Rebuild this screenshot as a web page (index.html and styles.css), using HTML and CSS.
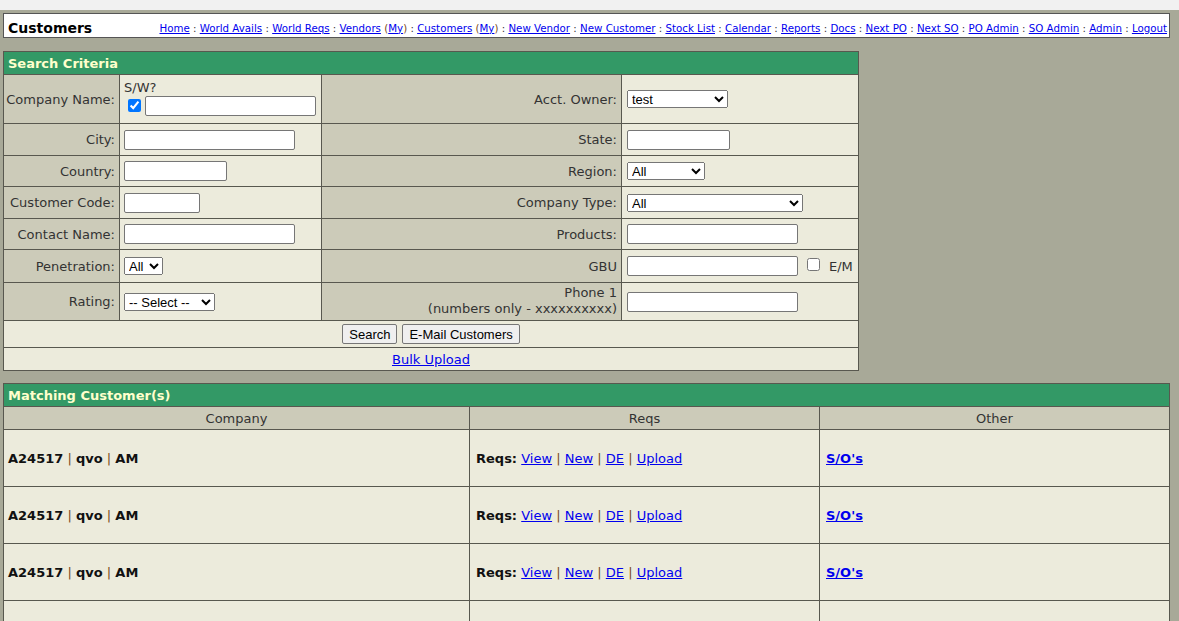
FILE: index.html
```html
<!DOCTYPE html>
<html>
<head>
<meta charset="utf-8">
<title>Customers</title>
<link rel="stylesheet" href="styles.css">
</head>
<body>
<div class="topstrip"></div>
<div class="page">
  <div class="titlebar">
    <span class="title">Customers</span>
    <nav class="nav"><a href="#">Home</a> : <a href="#">World Avails</a> : <a href="#">World Reqs</a> : <a href="#">Vendors</a> <span class="p">(</span><a href="#">My</a><span class="p">)</span> : <a href="#">Customers</a> <span class="p">(</span><a href="#">My</a><span class="p">)</span> : <a href="#">New Vendor</a> : <a href="#">New Customer</a> : <a href="#">Stock List</a> : <a href="#">Calendar</a> : <a href="#">Reports</a> : <a href="#">Docs</a> : <a href="#">Next PO</a> : <a href="#">Next SO</a> : <a href="#">PO Admin</a> : <a href="#">SO Admin</a> : <a href="#">Admin</a> : <a href="#">Logout</a></nav>
  </div>

  <div class="grid search">
    <div class="bar full">Search Criteria</div>

    <div class="lbl">Company Name:</div>
    <div class="val stack">
      <div class="sw">S/W?</div>
      <div class="inline"><input type="checkbox" class="cb" checked><input type="text" class="in w171"></div>
    </div>
    <div class="lbl">Acct. Owner:</div>
    <div class="val c4"><select class="sel w101"><option>test</option></select></div>

    <div class="lbl">City:</div>
    <div class="val"><input type="text" class="in w171"></div>
    <div class="lbl">State:</div>
    <div class="val c4"><input type="text" class="in w103"></div>

    <div class="lbl">Country:</div>
    <div class="val"><input type="text" class="in w103"></div>
    <div class="lbl">Region:</div>
    <div class="val c4"><select class="sel w78"><option>All</option></select></div>

    <div class="lbl">Customer Code:</div>
    <div class="val"><input type="text" class="in w76"></div>
    <div class="lbl">Company Type:</div>
    <div class="val c4"><select class="sel w176"><option>All</option></select></div>

    <div class="lbl">Contact Name:</div>
    <div class="val"><input type="text" class="in w171"></div>
    <div class="lbl">Products:</div>
    <div class="val c4"><input type="text" class="in w171"></div>

    <div class="lbl">Penetration:</div>
    <div class="val"><select class="sel w39"><option>All</option></select></div>
    <div class="lbl">GBU</div>
    <div class="val c4"><input type="text" class="in w171"><input type="checkbox" class="cb em"><span class="emtxt">E/M</span></div>

    <div class="lbl">Rating:</div>
    <div class="val"><select class="sel w91"><option>-- Select --</option></select></div>
    <div class="lbl two">Phone 1<br>(numbers only - xxxxxxxxxx)</div>
    <div class="val c4"><input type="text" class="in w171"></div>

    <div class="light full btnrow"><button class="btn">Search</button><button class="btn">E-Mail Customers</button></div>
    <div class="light full center"><a href="#">Bulk Upload</a></div>
  </div>

  <div class="grid results">
    <div class="bar full">Matching Customer(s)</div>
    <div class="colhead">Company</div>
    <div class="colhead">Reqs</div>
    <div class="colhead">Other</div>

    <div class="cell co"><span><b>A24517</b> <span class="pipe">|</span> <b>qvo</b> <span class="pipe">|</span> <b>AM</b></span></div>
    <div class="cell"><span><b>Reqs:</b> <a href="#">View</a> <span class="pipe">|</span> <a href="#">New</a> <span class="pipe">|</span> <a href="#">DE</a> <span class="pipe">|</span> <a href="#">Upload</a></span></div>
    <div class="cell"><span><a href="#" class="so">S/O's</a></span></div>

    <div class="cell co"><span><b>A24517</b> <span class="pipe">|</span> <b>qvo</b> <span class="pipe">|</span> <b>AM</b></span></div>
    <div class="cell"><span><b>Reqs:</b> <a href="#">View</a> <span class="pipe">|</span> <a href="#">New</a> <span class="pipe">|</span> <a href="#">DE</a> <span class="pipe">|</span> <a href="#">Upload</a></span></div>
    <div class="cell"><span><a href="#" class="so">S/O's</a></span></div>

    <div class="cell co"><span><b>A24517</b> <span class="pipe">|</span> <b>qvo</b> <span class="pipe">|</span> <b>AM</b></span></div>
    <div class="cell"><span><b>Reqs:</b> <a href="#">View</a> <span class="pipe">|</span> <a href="#">New</a> <span class="pipe">|</span> <a href="#">DE</a> <span class="pipe">|</span> <a href="#">Upload</a></span></div>
    <div class="cell"><span><a href="#" class="so">S/O's</a></span></div>

    <div class="cell co"></div>
    <div class="cell"></div>
    <div class="cell"></div>
  </div>
</div>
</body>
</html>
```

FILE: styles.css
```css
html, body {
  margin: 0;
  padding: 0;
  height: 621px;
  overflow: hidden;
}
body {
  background: #a8a998;
  font-family: "DejaVu Sans", Verdana, sans-serif;
  font-size: 13px;
  color: #333;
}
a { color: #0000ee; }

.topstrip {
  height: 10px;
  background: #f1f1f1;
}
.page {
  padding: 3px 0 0 3px;
  width: 1167px;
}

.titlebar {
  box-sizing: border-box;
  height: 25px;
  background: #fff;
  border: 1px solid #555;
  display: flex;
  align-items: center;
  justify-content: space-between;
  padding: 4px 2px 0 4px;
}
.title {
  font-weight: bold;
  font-size: 14px;
  color: #000;
}
.nav {
  font-size: 10.25px;
  color: #333;
  white-space: nowrap;
}
.nav .p { color: #7a4a20; }

.grid {
  display: grid;
  gap: 1px;
  background: #58584f;
  border: 1px solid #58584f;
}
.search {
  margin-top: 13px;
  width: 854px;
  grid-template-columns: 115px 201px 299px 236px;
  grid-template-rows: 22px 48px 31px 30px 31px 30px 32px 37px 26px 22px;
}
.results {
  margin-top: 12px;
  width: 1165px;
  grid-template-columns: 465px 349px 349px;
  grid-template-rows: 22px 22px 56px 56px 56px 56px;
}

.full { grid-column: 1 / -1; }
.bar {
  background: #339966;
  color: #ffffcc;
  font-weight: bold;
  display: flex;
  align-items: center;
  padding-left: 4px;
}
.lbl {
  background: #cccbb9;
  display: flex;
  align-items: center;
  justify-content: flex-end;
  padding-right: 4px;
  text-align: right;
}
.lbl.two { line-height: 16px; padding-bottom: 1px; }
.val {
  background: #ecebdc;
  display: flex;
  align-items: center;
  padding-left: 4px;
}
.val.c4 { padding-left: 5px; }
.val.stack {
  flex-direction: column;
  align-items: flex-start;
  justify-content: center;
  padding-bottom: 3px;
}
.sw { line-height: 16px; }
.inline { display: flex; align-items: center; }

.in {
  box-sizing: border-box;
  height: 20px;
  border: 1px solid #767676;
  border-radius: 2px;
  background: #fff;
  margin: 0;
  padding: 1px 2px;
  font-family: "Liberation Sans", Arial, sans-serif;
  font-size: 13px;
}
.w171 { width: 171px; }
.w103 { width: 103px; }
.w76 { width: 76px; }

.sel {
  box-sizing: border-box;
  height: 18px;
  margin: 0;
  font-family: "Liberation Sans", Arial, sans-serif;
  font-size: 13px;
  color: #000;
}
.w101 { width: 101px; }
.w78 { width: 78px; }
.w176 { width: 176px; }
.w39 { width: 39px; }
.w91 { width: 91px; }

.cb {
  width: 13px;
  height: 13px;
  margin: 0 4px 0 4px;
}
.cb.em { margin: 0 0 4px 9px; }
.emtxt { margin-left: 9px; }

.light { background: #ecebdc; }
.btnrow {
  display: flex;
  justify-content: center;
  align-items: center;
  gap: 5px;
}
.btn {
  box-sizing: border-box;
  height: 20px;
  padding: 0 6px;
  margin: 0;
  border: 1px solid #767676;
  border-radius: 2px;
  background: #efefef;
  font-family: "Liberation Sans", Arial, sans-serif;
  font-size: 13px;
  color: #000;
}
.center {
  display: flex;
  justify-content: center;
  align-items: center;
}

.colhead {
  background: #cccbb9;
  display: flex;
  align-items: center;
  justify-content: center;
}
.cell {
  background: #ecebdc;
  display: flex;
  align-items: center;
  padding-left: 6px;
  color: #111;
  white-space: nowrap;
}
.cell.co { padding-left: 4px; }
.cell b { font-weight: bold; }
.pipe { color: #7a4a20; }
.so { font-weight: bold; }
```
